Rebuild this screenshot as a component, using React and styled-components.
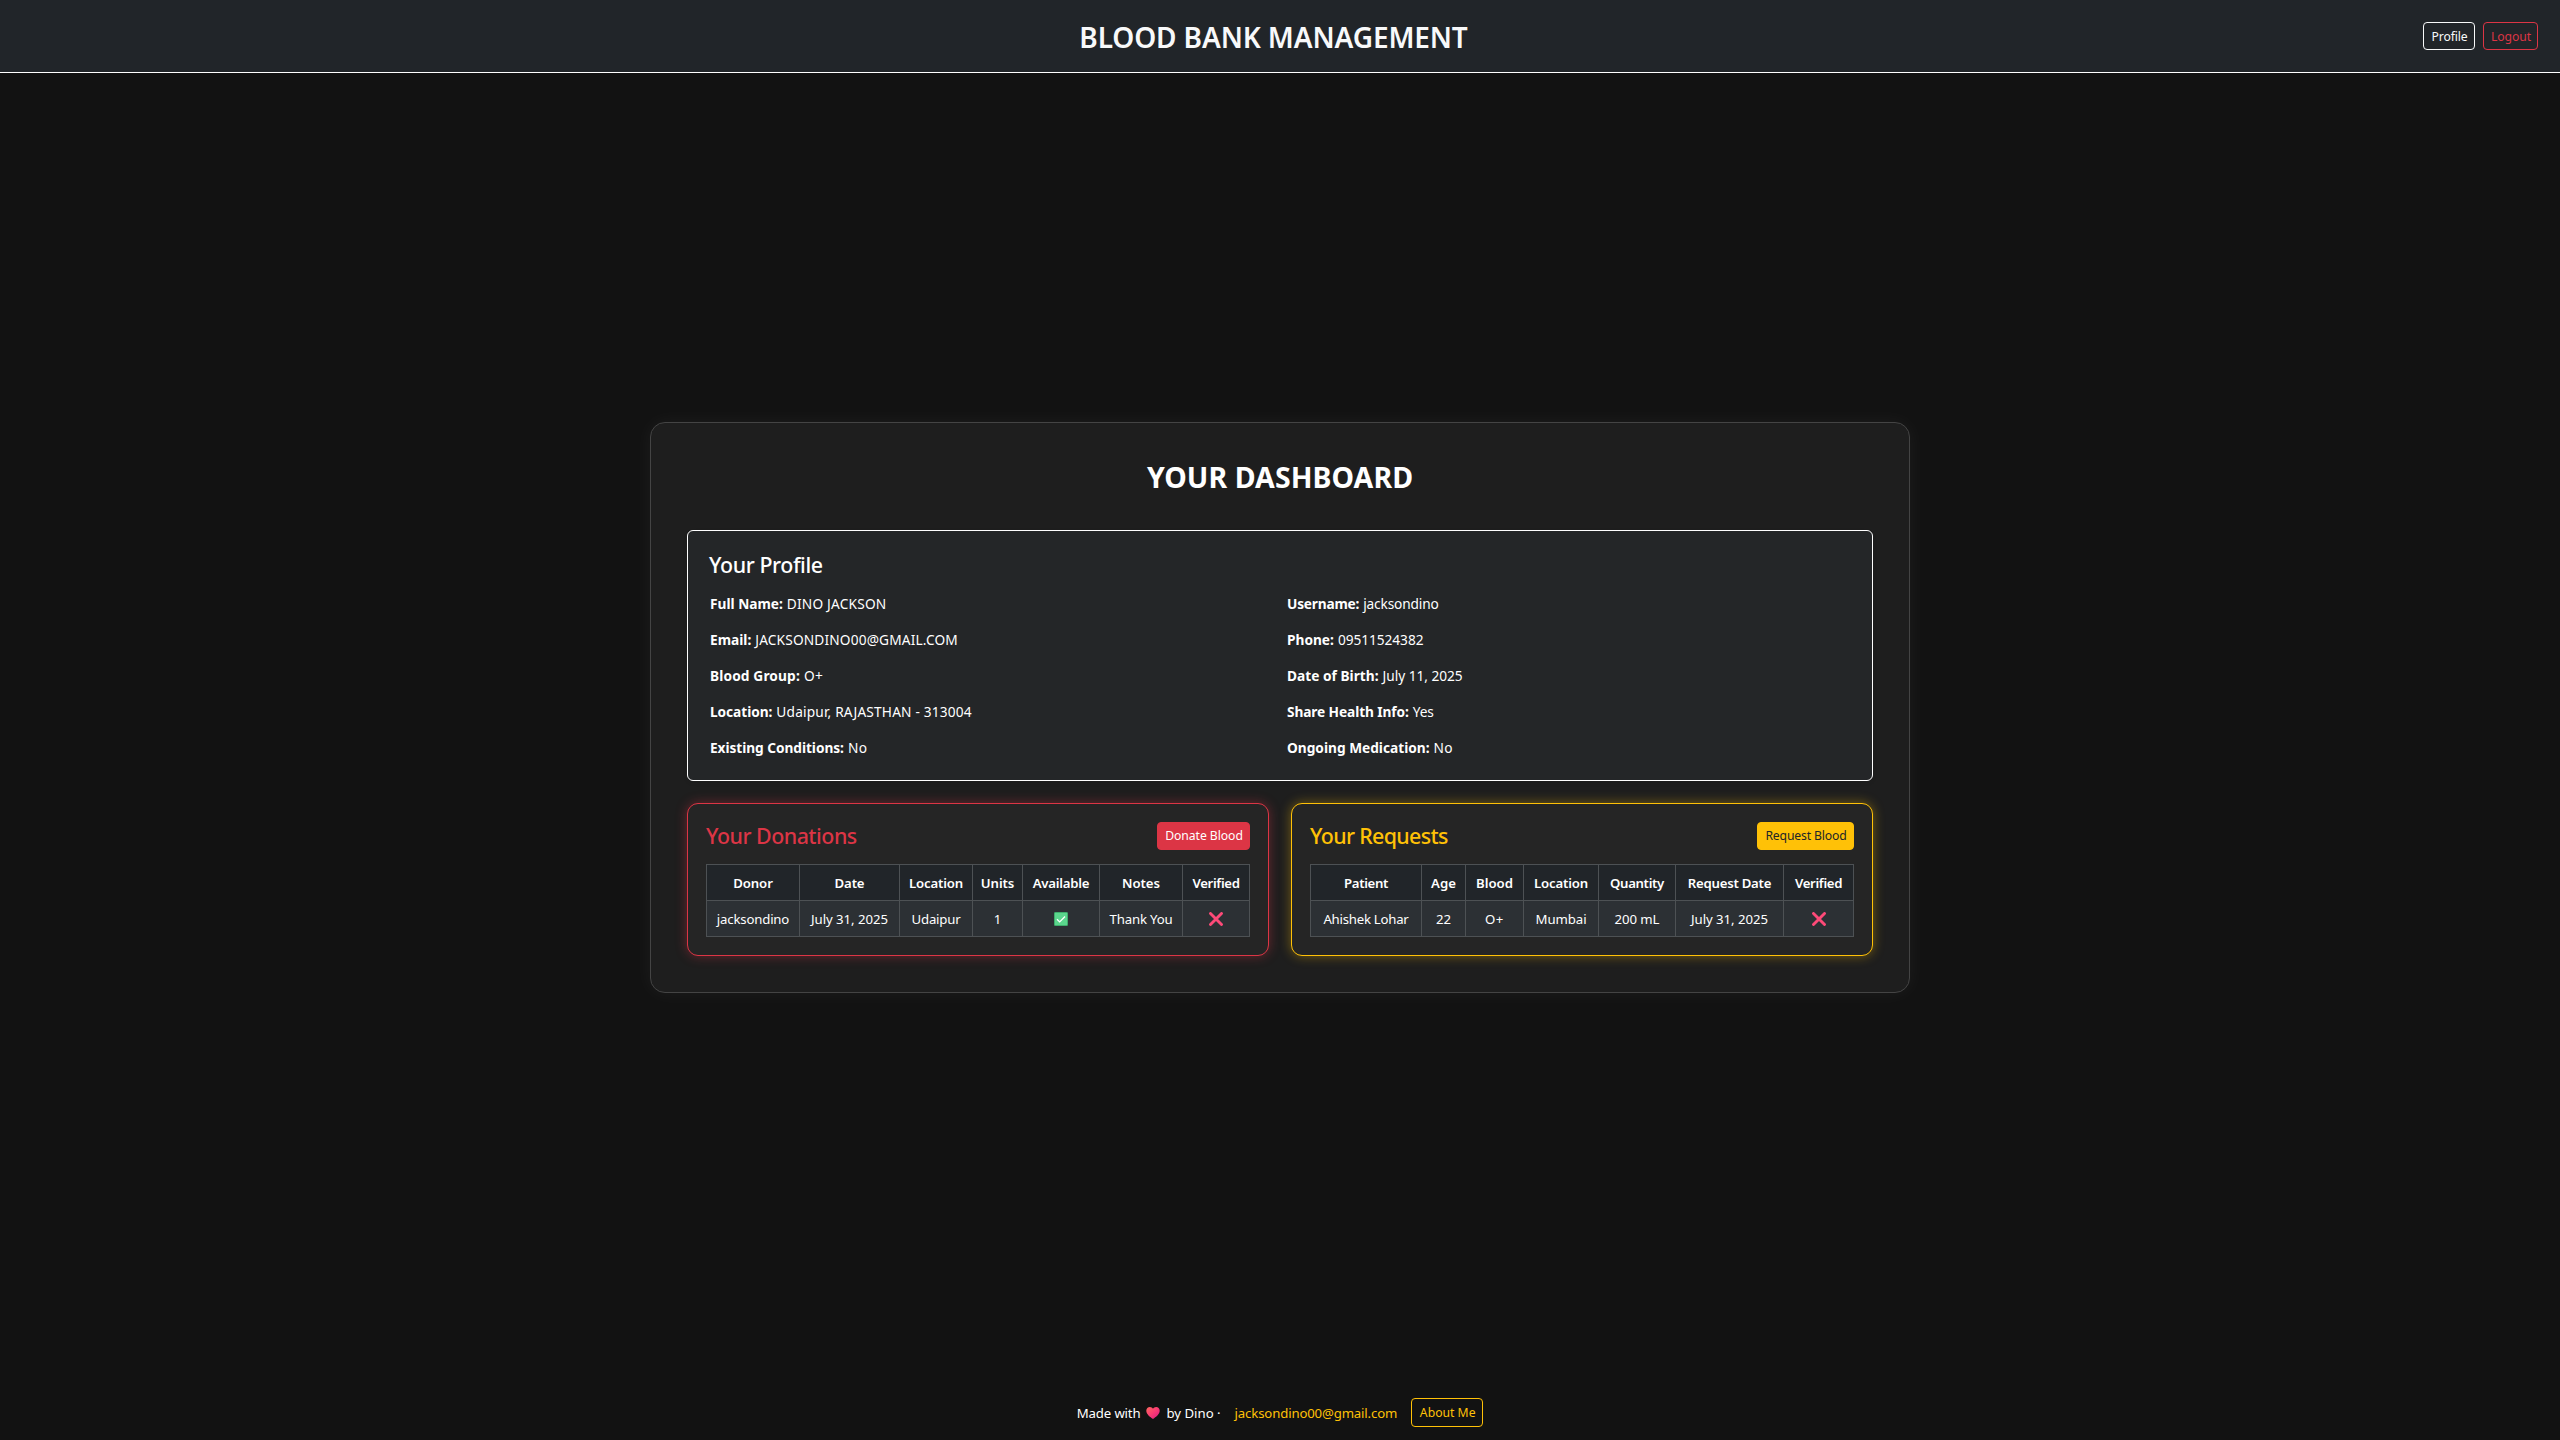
import React from "react";
import styled, { createGlobalStyle } from "styled-components";

const GlobalStyle = createGlobalStyle`
  *, *::before, *::after { box-sizing: border-box; }
  body {
    margin: 0;
    background: #121212;
    color: #fff;
    font-family: "Noto Sans", "Open Sans", sans-serif;
  }
`;

const Page = styled.div`
  display: flex;
  flex-direction: column;
  min-height: 100vh;
`;

const Header = styled.header`
  display: flex;
  align-items: center;
  height: 73px;
  padding: 0 22px 0 124px;
  background: #212529;
  border-bottom: 1px solid #fff;
`;

const Brand = styled.h1`
  flex: 1;
  margin: 0;
  padding-top: 2px;
  font-size: 28px;
  font-weight: 600;
  line-height: 34px;
  letter-spacing: -0.12px;
  text-align: center;
  color: #f8f9fa;
`;

const Actions = styled.nav`
  display: flex;
  gap: 8px;
`;

const tones = {
  light: "color: #f8f9fa; border-color: #f8f9fa; background: transparent;",
  danger: "color: #dc3545; border-color: #dc3545; background: transparent;",
  warning: "color: #ffc107; border-color: #ffc107; background: transparent;",
  dangerSolid: "color: #fff; border-color: #dc3545; background: #dc3545;",
  warningSolid: "color: #212529; border-color: #ffc107; background: #ffc107;",
};

const Button = styled.button`
  width: ${(p) => p.$width}px;
  height: ${(p) => p.$height || 28}px;
  padding: ${(p) => (p.$low ? "1px 0 0 1px" : "0 0 1px 1px")};
  border: 1px solid;
  border-radius: 4px;
  font-family: inherit;
  font-size: 12.2px;
  line-height: 18px;
  letter-spacing: ${(p) => p.$track || 0}px;
  white-space: nowrap;
  cursor: pointer;
  ${(p) => tones[p.$tone]}
`;

const Main = styled.main`
  flex: 1;
  display: flex;
  align-items: center;
  justify-content: center;
`;

const Dashboard = styled.section`
  width: 1260px;
  padding: 36px;
  border: 1px solid #444;
  border-radius: 15px;
  background: #1e1e1e;
  box-shadow: 0 0 20px rgba(255, 255, 255, 0.05);
`;

const DashboardTitle = styled.h2`
  height: 35px;
  margin: 0 0 36px;
  font-size: 28.5px;
  font-weight: 700;
  line-height: 36px;
  letter-spacing: 0.07px;
  text-align: center;
`;

const ProfileCard = styled.section`
  margin-bottom: 22px;
  padding: 21px;
  border: 1px solid #fff;
  border-radius: 6px;
  background: #242628;
  box-shadow: 0 2px 4px rgba(0, 0, 0, 0.075);
`;

const CardTitle = styled.h4`
  margin: 0;
  font-size: 21.4px;
  font-weight: 500;
  line-height: 26px;
  letter-spacing: ${(p) => p.$track || 0}px;
  color: ${(p) => p.$color || "#fff"};
`;

const ProfileGrid = styled.div`
  display: grid;
  grid-template-columns: 1fr 1fr;
  gap: 14px 13px;
  margin-top: 15px;
  padding-left: 1px;
`;

const Field = styled.div`
  display: flex;
  gap: 4px;
  font-size: 13.7px;
  line-height: 22px;
  white-space: nowrap;
`;

const Label = styled.strong`
  font-weight: 700;
  letter-spacing: ${(p) => p.$track || 0}px;
`;

const Value = styled.span`
  letter-spacing: ${(p) => p.$track || 0}px;
`;

const Columns = styled.div`
  display: grid;
  grid-template-columns: 1fr 1fr;
  gap: 22px;
`;

const RecordCard = styled.section`
  padding: 18px;
  border: 1px solid ${(p) => p.$color};
  border-radius: 11px;
  background: #252525;
  box-shadow: 0 0 12px ${(p) => p.$glow};
`;

const RecordHead = styled.div`
  display: flex;
  align-items: center;
  justify-content: space-between;
  margin-bottom: 14px;
`;

const Table = styled.table`
  width: 544px;
  table-layout: fixed;
  border-collapse: separate;
  border-spacing: 0;
  border-top: 1px solid #4d5154;
  border-left: 1px solid #4d5154;
`;

const Col = styled.col`
  width: ${(p) => p.$width}px;
`;

const HeadCell = styled.th`
  height: 36px;
  padding: 1px 0 0;
  border-right: 1px solid #4d5154;
  border-bottom: 1px solid #4d5154;
  background: #212529;
  font-size: 13.2px;
  font-weight: 600;
  line-height: 20px;
  letter-spacing: ${(p) => p.$track || 0}px;
  white-space: nowrap;
`;

const Cell = styled.td`
  height: 36px;
  padding: 1px 0 0;
  border-right: 1px solid #4d5154;
  border-bottom: 1px solid #4d5154;
  background: #2c3034;
  font-size: 13.2px;
  line-height: 20px;
  letter-spacing: ${(p) => p.$track || 0}px;
  text-align: center;
  white-space: nowrap;
`;

const Glyph = styled.svg`
  display: block;
  width: 14px;
  height: 14px;
  margin: 0 auto;
`;

const Footer = styled.footer`
  display: flex;
  align-items: flex-end;
  justify-content: center;
  height: 98px;
  padding-bottom: 13px;
`;

const FooterRow = styled.div`
  display: flex;
  align-items: center;
  height: 29px;
  font-size: 13.2px;
  line-height: 20px;
  white-space: nowrap;
`;

const Heart = styled(Glyph)`
  margin: 1px 6px 0;
`;

const FooterText = styled.span`
  letter-spacing: ${(p) => p.$track || 0}px;
`;

const MailLink = styled.a`
  margin: 0 14px 0 14px;
  color: #ffc107;
  letter-spacing: -0.15px;
  text-decoration: none;
`;

const CheckIcon = () => (
  <Glyph viewBox="0 0 14 14" role="img" aria-label="Yes">
    <rect x="0.5" y="0.5" width="13" height="13" rx="0.6" fill="#5bd68d" stroke="#3fae6d" />
    <path d="M3 7.200 5.700 9.900 11 4.500" fill="none" stroke="#fff" strokeWidth="1.3" />
  </Glyph>
);

const CrossIcon = () => (
  <Glyph viewBox="0 0 14 14" role="img" aria-label="No">
    <path d="M1.500 1.500 12.500 12.500M12.500 1.500 1.500 12.500" fill="none" stroke="#fd4a78" strokeWidth="2.900" strokeLinecap="round" />
  </Glyph>
);

const HeartIcon = () => (
  <Heart viewBox="0 0 14 14" role="img" aria-label="love">
    <defs>
      <linearGradient id="heart" x1="0" y1="0" x2="1" y2="1">
        <stop offset="0" stopColor="#ff6a5e" />
        <stop offset="0.5" stopColor="#fb3a74" />
        <stop offset="1" stopColor="#d81b82" />
      </linearGradient>
    </defs>
    <path d="M7 13C4 10.9.3 8.2.3 4.7.3 2.500 1.900.9 3.900.9 5.200.9 6.400 1.600 7 2.700 7.600 1.600 8.800.9 10.100.9c2 0 3.600 1.600 3.600 3.800C13.700 8.200 10 10.900 7 13Z" fill="url(#heart)" />
  </Heart>
);

const icons = { check: <CheckIcon />, cross: <CrossIcon /> };

const profile = [
  ["Full Name:", 0, "DINO JACKSON", 0.2],
  ["Username:", -0.2, "jacksondino", -0.15],
  ["Email:", 0, "JACKSONDINO00@GMAIL.COM", 0.16],
  ["Phone:", 0, "09511524382", -0.05],
  ["Blood Group:", 0.14, "O+", 0.5],
  ["Date of Birth:", 0.02, "July 11, 2025", -0.03],
  ["Location:", -0.05, "Udaipur, RAJASTHAN - 313004", 0.18],
  ["Share Health Info:", -0.1, "Yes", -0.04],
  ["Existing Conditions:", -0.05, "No", 0.4],
  ["Ongoing Medication:", 0, "No", 0.4],
];

const donations = {
  columns: [
    ["Donor", 93, -0.1],
    ["Date", 100, -0.15],
    ["Location", 73, -0.15],
    ["Units", 50, -0.1],
    ["Available", 77, -0.22],
    ["Notes", 83, -0.08],
    ["Verified", 67, -0.33],
  ],
  cells: [
    ["jacksondino", -0.18],
    ["July 31, 2025", -0.04],
    ["Udaipur", -0.18],
    ["1", 0],
    ["check"],
    ["Thank You", -0.15],
    ["cross"],
  ],
};

const requests = {
  columns: [
    ["Patient", 111, -0.35],
    ["Age", 44, 0],
    ["Blood", 58, 0],
    ["Location", 75, -0.15],
    ["Quantity", 77, -0.32],
    ["Request Date", 108, -0.25],
    ["Verified", 70, -0.33],
  ],
  cells: [
    ["Ahishek Lohar", -0.24],
    ["22", -0.1],
    ["O+", 0.6],
    ["Mumbai", -0.05],
    ["200 mL", -0.08],
    ["July 31, 2025", -0.04],
    ["cross"],
  ],
};

const Records = ({ data }) => (
  <Table>
    <colgroup>
      {data.columns.map(([name, width]) => (
        <Col key={name} $width={width} />
      ))}
    </colgroup>
    <thead>
      <tr>
        {data.columns.map(([name, , track]) => (
          <HeadCell key={name} $track={track}>{name}</HeadCell>
        ))}
      </tr>
    </thead>
    <tbody>
      <tr>
        {data.cells.map(([text, track], i) => (
          <Cell key={i} $track={track}>{icons[text] || text}</Cell>
        ))}
      </tr>
    </tbody>
  </Table>
);

export default function App() {
  return (
    <Page>
      <GlobalStyle />
      <Header>
        <Brand>BLOOD BANK MANAGEMENT</Brand>
        <Actions>
          <Button $tone="light" $width={52} $track={-0.12} $low>Profile</Button>
          <Button $tone="danger" $width={55} $track={-0.12} $low>Logout</Button>
        </Actions>
      </Header>
      <Main>
        <Dashboard>
          <DashboardTitle>YOUR DASHBOARD</DashboardTitle>
          <ProfileCard>
            <CardTitle $track={-0.42}>Your Profile</CardTitle>
            <ProfileGrid>
              {profile.map(([label, labelTrack, value, track]) => (
                <Field key={label}>
                  <Label $track={labelTrack}>{label}</Label>
                  <Value $track={track}>{value}</Value>
                </Field>
              ))}
            </ProfileGrid>
          </ProfileCard>
          <Columns>
            <RecordCard $color="#dc3545" $glow="rgba(220, 53, 69, 0.4)">
              <RecordHead>
                <CardTitle $color="#dc3545" $track={-0.5}>Your Donations</CardTitle>
                <Button $tone="dangerSolid" $width={93} $track={-0.06}>Donate Blood</Button>
              </RecordHead>
              <Records data={donations} />
            </RecordCard>
            <RecordCard $color="#ffc107" $glow="rgba(255, 193, 7, 0.4)">
              <RecordHead>
                <CardTitle $color="#ffc107" $track={-0.66}>Your Requests</CardTitle>
                <Button $tone="warningSolid" $width={97} $track={-0.14}>Request Blood</Button>
              </RecordHead>
              <Records data={requests} />
            </RecordCard>
          </Columns>
        </Dashboard>
      </Main>
      <Footer>
        <FooterRow>
          <FooterText $track={-0.15}>Made with</FooterText>
          <HeartIcon />
          <FooterText>by Dino ·</FooterText>
          <MailLink href="#mail">jacksondino00@gmail.com</MailLink>
          <Button $tone="warning" $width={72} $height={29} $low>About Me</Button>
        </FooterRow>
      </Footer>
    </Page>
  );
}
